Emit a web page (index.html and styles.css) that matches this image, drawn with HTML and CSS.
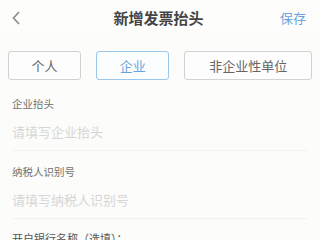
FILE: index.html
```html
<!DOCTYPE html>
<html>
<head>
	<meta charset="utf-8">
	<meta name="viewport" content="width=device-width, initial-scale=1">
	<title>新增发票抬头</title>
	<link rel="stylesheet" href="styles.css">
</head>
<body>

<header class="topbar">
	<span class="back"><svg width="10" height="16" viewBox="0 0 10 16"><path d="M8 2 L2.5 8 L8 14" fill="none" stroke="#8a8a8a" stroke-width="1.6"/></svg></span>
	<h1>新增发票抬头</h1>
	<span class="save">保存</span>
</header>

<div class="types">
	<button class="type">个人</button>
	<button class="type active">企业</button>
	<button class="type wide">非企业性单位</button>
</div>

<div class="field first">
	<label>企业抬头</label>
	<input type="text" placeholder="请填写企业抬头">
</div>

<div class="field">
	<label>纳税人识别号</label>
	<input type="text" placeholder="请填写纳税人识别号">
</div>

<div class="more">开户银行名称（选填）：</div>

</body>
</html>
```

FILE: styles.css
```css
html {
	font-family: "Noto Sans CJK SC", "Noto Sans", sans-serif;
}

body {
	margin: 0;
	background: #fcfcfa;
	color: #333;
	overflow: hidden;
}

.topbar {
	height: 35px;
	display: flex;
	align-items: center;
	justify-content: space-between;
	padding: 0 14px 0 11px;
	background: #fdfdfc;
}

.back {
	display: flex;
	width: 40px;
}

.topbar h1 {
	margin: 0;
	font-size: 15px;
	font-weight: 700;
	color: #444;
}

.save {
	width: 40px;
	text-align: right;
	font-size: 13px;
	color: #6aa3da;
}

.types {
	display: flex;
	gap: 15px;
	padding: 16px 8px 0 8px;
}

.type {
	height: 29px;
	width: 74px;
	padding: 0;
	background: #fdfdfd;
	border: 1px solid #d2d2d2;
	border-radius: 3px;
	font-family: inherit;
	font-size: 13px;
	color: #666;
}

.type.active {
	border-color: #9cc6ec;
	color: #6aa3da;
	background: #fbfdff;
}

.type.wide {
	width: 129px;
}

.field {
	padding: 13px 12px 0 12px;
	display: flex;
	flex-direction: column;
}

.field.first {
	padding-top: 16px;
}

.field label {
	font-size: 10.5px;
	color: #707070;
	line-height: 16px;
}

.field input {
	margin-top: 10px;
	border: none;
	border-bottom: 1px solid #f2f2f0;
	background: transparent;
	padding: 0 0 9px 0;
	font-family: inherit;
	font-size: 13px;
	outline: 0;
}

.field input::placeholder {
	color: #d6d6d6;
}

.more {
	padding: 11px 12px 0 12px;
	font-size: 11px;
	color: #555;
}
```
